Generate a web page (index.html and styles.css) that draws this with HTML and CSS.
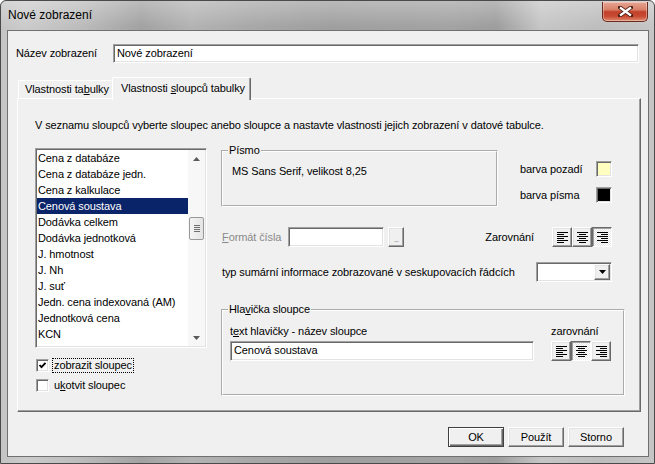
FILE: index.html
```html
<!DOCTYPE html>
<html lang="cs">
<head>
<meta charset="utf-8">
<title>Nové zobrazení</title>
<link rel="stylesheet" href="styles.css">
</head>
<body>
<div class="window">
  <div class="titlebar">
    <span class="title">Nové zobrazení</span>
    <div class="close-btn">
      <svg width="15" height="11" viewBox="0 0 15 11"><path d="M2 1.5 L13 9.5 M13 1.5 L2 9.5" stroke="#4a1a10" stroke-width="4" stroke-linecap="square"/><path d="M2 1.5 L13 9.5 M13 1.5 L2 9.5" stroke="#fff" stroke-width="2.2"/></svg>
    </div>
  </div>
  <div class="client">
    <div class="name-row">
      <span class="name-label">Název zobrazení</span>
      <div class="field name-field">Nové zobrazení</div>
    </div>
    <div class="tabs">
      <div class="tab tab-1">Vlastnosti ta<u>b</u>ulky</div>
      <div class="tab tab-active">Vlastnosti <u>s</u>loupců tabulky</div>
    </div>
    <div class="panel">
      <p class="desc">V seznamu sloupců vyberte sloupec anebo sloupce a nastavte vlastnosti jejich zobrazení v datové tabulce.</p>
      <div class="cols">
        <div class="col-left">
          <div class="listbox">
            <ul class="items">
              <li>Cena z databáze</li>
              <li>Cena z databáze jedn.</li>
              <li>Cena z kalkulace</li>
              <li class="sel">Cenová soustava</li>
              <li>Dodávka celkem</li>
              <li>Dodávka jednotková</li>
              <li>J. hmotnost</li>
              <li>J. Nh</li>
              <li>J. suť</li>
              <li>Jedn. cena indexovaná (AM)</li>
              <li>Jednotková cena</li>
              <li>KCN</li>
              <li>Kód položky</li>
            </ul>
            <div class="vscroll">
              <div class="sb-arrow"><svg width="7" height="4" viewBox="0 0 7 4"><path d="M3.5 0 L7 4 L0 4 Z" fill="#5a5a5a"/></svg></div>
              <div class="sb-track">
                <div class="sb-thumb"><svg width="6" height="7" viewBox="0 0 6 7"><path d="M0 .5h6M0 2.5h6M0 4.5h6M0 6.5h6" stroke="#6f6f6f"/></svg></div>
              </div>
              <div class="sb-arrow"><svg width="7" height="4" viewBox="0 0 7 4"><path d="M0 0 L7 0 L3.5 4 Z" fill="#5a5a5a"/></svg></div>
            </div>
          </div>
          <div class="check check-1">
            <span class="box"><svg width="9" height="9" viewBox="0 0 9 9"><path d="M1.5 4 L3.5 6.2 L7.5 1.8" stroke="#000" stroke-width="1.8" fill="none"/></svg></span>
            <span class="check-text focus">zobrazit sloupec</span>
          </div>
          <div class="check check-2">
            <span class="box"></span>
            <span class="check-text">u<u>k</u>otvit sloupec</span>
          </div>
        </div>
        <div class="col-right">
          <div class="row-font">
            <fieldset class="group group-font">
              <legend>Písmo</legend>
              <div class="font-name">MS Sans Serif, velikost 8,25</div>
            </fieldset>
            <div class="colors">
              <span>barva pozadí</span><span class="swatch swatch-bg"></span>
              <span>barva písma</span><span class="swatch swatch-fg"></span>
            </div>
          </div>
          <div class="row-format">
            <span class="format-label"><u>F</u>ormát čísla</span>
            <div class="field format-field"></div>
            <div class="raised dots-btn">...</div>
            <span class="align-label">Zarovnání</span>
            <div class="align-group">
              <div class="raised abtn"><svg width="11" height="11" viewBox="0 0 11 11"><path d="M0 .5h11M0 2.5h7M0 4.5h11M0 6.5h7M0 8.5h11M0 10.5h7" stroke="#000"/></svg></div>
              <div class="raised abtn"><svg width="11" height="11" viewBox="0 0 11 11"><path d="M0 .5h11M2 2.5h7M0 4.5h11M2 6.5h7M0 8.5h11M2 10.5h7" stroke="#000"/></svg></div>
              <div class="sunken-btn abtn"><svg width="11" height="11" viewBox="0 0 11 11"><path d="M0 .5h11M4 2.5h7M0 4.5h11M4 6.5h7M0 8.5h11M4 10.5h7" stroke="#000"/></svg></div>
            </div>
          </div>
          <div class="row-summary">
            <span class="summary-label">typ sumární informace zobrazované v seskupovacích řádcích</span>
            <div class="field combo">
              <span class="raised combo-btn"><svg width="7" height="4" viewBox="0 0 7 4"><path d="M0 0 L7 0 L3.5 4 Z" fill="#000"/></svg></span>
            </div>
          </div>
          <fieldset class="group group-header">
            <legend>Hla<u>v</u>ička sloupce</legend>
            <div class="header-row">
              <div class="header-text">
                <div class="lbl">t<u>e</u>xt hlavičky - název sloupce</div>
                <div class="field header-field">Cenová soustava</div>
              </div>
              <div class="header-align">
                <div class="lbl">zarovnání</div>
                <div class="align-group align-group-2">
                  <div class="raised abtn"><svg width="11" height="11" viewBox="0 0 11 11"><path d="M0 .5h11M0 2.5h7M0 4.5h11M0 6.5h7M0 8.5h11M0 10.5h7" stroke="#000"/></svg></div>
                  <div class="sunken-btn abtn"><svg width="11" height="11" viewBox="0 0 11 11"><path d="M0 .5h11M2 2.5h7M0 4.5h11M2 6.5h7M0 8.5h11M2 10.5h7" stroke="#000"/></svg></div>
                  <div class="raised abtn"><svg width="11" height="11" viewBox="0 0 11 11"><path d="M0 .5h11M4 2.5h7M0 4.5h11M4 6.5h7M0 8.5h11M4 10.5h7" stroke="#000"/></svg></div>
                </div>
              </div>
            </div>
          </fieldset>
        </div>
      </div>
    </div>
    <div class="buttons">
      <div class="btn btn-default">OK</div>
      <div class="btn">Použít</div>
      <div class="btn">Storno</div>
    </div>
  </div>
</div>
</body>
</html>
```

FILE: styles.css
```css
* { box-sizing: border-box; }
html, body { margin: 0; padding: 0; }
body {
  width: 655px;
  height: 464px;
  overflow: hidden;
  background: #fff;
  font: 11px/13px "Liberation Sans", Arial, sans-serif;
  letter-spacing: -0.1px;
  color: #000;
}
u { text-decoration: underline; text-underline-offset: 1px; }

.window {
  width: 655px;
  height: 464px;
  display: flex;
  flex-direction: column;
  border: 1px solid #4a4a4a;
  border-radius: 6px 6px 0 0;
  padding: 0 5px 6px 6px;
  background:
    linear-gradient(180deg, rgba(255,255,255,.28) 0, rgba(255,255,255,0) 26px),
    linear-gradient(90deg, #c4c4c4 0, #cbcbcb 25px, #bcbcbc 80px, #a2a2a2 140px, #b3b3b3 190px, #a8a8a8 250px, #9f9f9f 330px, #a3a3a3 450px, #9d9d9d 495px, #c6c6c6 540px, #bdbdbd 600px, #c6c6c6 655px);
}

.titlebar {
  height: 29px;
  flex: 0 0 29px;
  display: flex;
  align-items: flex-start;
}
.title {
  margin: 7px 0 0 1px;
  font: 12px/15px "Liberation Sans", Arial, sans-serif;
  letter-spacing: 0;
  color: #000;
}
.close-btn {
  margin: 1px 1px 0 auto;
  width: 46px;
  height: 20px;
  border: 1px solid #6b2a1e;
  border-top: none;
  border-radius: 0 0 5px 5px;
  background: linear-gradient(180deg, #e6a595 0, #d98169 40%, #c2402a 52%, #c84a33 75%, #de8a6c 100%);
  box-shadow: inset 0 0 0 1px rgba(255,255,255,.35);
  display: flex;
  align-items: center;
  justify-content: center;
}

.client {
  flex: 1;
  display: flex;
  flex-direction: column;
  border: 1px solid #707070;
  background: #f0f0f0;
}

/* sunken field */
.field {
  background: #fff;
  border: 1px solid;
  border-color: #a0a0a0 #fff #fff #a0a0a0;
  box-shadow: inset 1px 1px 0 #696969, inset -1px -1px 0 #e3e3e3;
  padding: 0 3px;
  line-height: 17px;
  white-space: nowrap;
}
.raised {
  background: #f0f0f0;
  border: 1px solid;
  border-color: #fff #696969 #696969 #fff;
  box-shadow: inset -1px -1px 0 #a0a0a0, inset 1px 1px 0 #e3e3e3;
}
.sunken-btn {
  border: 1px solid;
  border-color: #696969 #fff #fff #696969;
  box-shadow: inset 1px 1px 0 #a0a0a0;
  background: repeating-conic-gradient(#fff 0 25%, #e6e6e6 0 50%) 0 0 / 2px 2px;
}

.name-row {
  display: flex;
  align-items: center;
  padding: 13px 0 0 8px;
}
.name-label { width: 97px; flex: 0 0 97px; }
.name-field { width: 526px; height: 19px; }

.tabs {
  display: flex;
  align-items: flex-end;
  height: 21px;
  margin: 14px 0 0 10px;
}
.tab {
  border: 1px solid transparent;
  border-bottom: none;
  border-top-color: #fff;
  border-left-color: #fff;
  border-radius: 2px 2px 0 0;
  white-space: nowrap;
}
.tab-1 {
  width: 94px;
  height: 18px;
  padding: 2px 0 0 6px;
}
.tab-active {
  position: relative;
  z-index: 1;
  width: 139px;
  height: 23px;
  margin-bottom: -2px;
  padding: 4px 0 0 8px;
  background: #f0f0f0;
  border-right-color: #696969;
  box-shadow: inset -1px 0 0 #a0a0a0;
}

.panel {
  margin-left: 9px;
  width: 624px;
  height: 314px;
  border: 1px solid;
  border-color: #fff #696969 #696969 #fff;
  box-shadow: inset -1px -1px 0 #a0a0a0;
}
.desc {
  margin: 20px 0 0 17px;
  white-space: nowrap;
}
.cols {
  display: flex;
  margin-top: 12px;
  padding-left: 17px;
}
.col-left {
  width: 172px;
  flex: 0 0 172px;
  padding-top: 4px;
}
.col-right {
  width: 404px;
  margin-left: 14px;
}

.listbox {
  width: 172px;
  height: 200px;
  display: flex;
  background: #fff;
  border: 1px solid;
  border-color: #a0a0a0 #fff #fff #a0a0a0;
  box-shadow: inset 1px 1px 0 #696969, inset -1px -1px 0 #e3e3e3;
  padding: 1px;
  overflow: hidden;
}
.items {
  flex: 1;
  list-style: none;
  margin: 0;
  padding: 0;
  overflow: hidden;
}
.items li {
  height: 16px;
  line-height: 16px;
  padding-left: 1px;
  white-space: nowrap;
}
.items li.sel { background: #0a246a; color: #fff; }

.vscroll {
  width: 17px;
  flex: 0 0 17px;
  display: flex;
  flex-direction: column;
  background: #f7f7f7;
}
.sb-arrow {
  height: 17px;
  flex: 0 0 17px;
  display: flex;
  align-items: center;
  justify-content: center;
}
.sb-track { flex: 1; }
.sb-thumb {
  margin: 50px 1px 0 1px;
  height: 23px;
  border: 1px solid #999;
  border-radius: 2px;
  background: linear-gradient(90deg, #f4f4f4, #e4e4e4);
  display: flex;
  align-items: center;
  justify-content: center;
}

.check {
  display: flex;
  align-items: center;
  height: 15px;
}
.check-1 { margin-top: 10px; }
.check-2 { margin-top: 5px; }
.box {
  width: 13px;
  height: 13px;
  margin-left: 1px;
  background: #fff;
  border: 1px solid;
  border-color: #a0a0a0 #fff #fff #a0a0a0;
  box-shadow: inset 1px 1px 0 #696969, inset -1px -1px 0 #e3e3e3;
  display: flex;
  align-items: center;
  justify-content: center;
}
.check-text {
  margin-left: 3px;
  padding: 0 1px;
  border: 1px solid transparent;
  line-height: 13px;
  white-space: nowrap;
}
.check-text.focus { border: 1px dotted #000; }

.group {
  margin: 0;
  padding: 0;
  min-width: 0;
  border: 2px groove #fff;
}
.group legend {
  margin-left: 5px;
  padding: 0 1px;
  line-height: 13px;
}
.row-font {
  display: flex;
  align-items: flex-start;
}
.group-font {
  width: 277px;
  height: 63px;
  flex: 0 0 277px;
}
.font-name { margin: 8px 0 0 9px; white-space: nowrap; }
.colors {
  display: grid;
  grid-template-columns: 76px 16px;
  row-gap: 10px;
  align-items: center;
  margin: 17px 0 0 22px;
  white-space: nowrap;
}
.swatch {
  width: 16px;
  height: 16px;
  border: 1px solid;
  border-color: #a0a0a0 #fff #fff #a0a0a0;
  box-shadow: inset 1px 1px 0 #696969, inset -1px -1px 0 #e3e3e3;
}
.swatch-bg { background: #ffffc0; }
.swatch-fg { background: #000; }

.row-format {
  display: flex;
  align-items: center;
  height: 20px;
  margin-top: 20px;
}
.format-label {
  width: 67px;
  flex: 0 0 67px;
  padding-left: 1px;
  color: #8a8a8a;
  white-space: nowrap;
}
.format-field { width: 96px; height: 20px; }
.dots-btn {
  width: 16px;
  height: 20px;
  margin-left: 4px;
  color: #9a9a9a;
  font-size: 9px;
  line-height: 22px;
  text-align: center;
  letter-spacing: -1px;
}
.align-label { margin-left: auto; }
.align-group {
  display: flex;
  margin: 0 13px 0 18px;
}
.abtn {
  width: 20px;
  height: 20px;
  display: flex;
  align-items: center;
  justify-content: center;
}
.abtn svg { display: block; }

.row-summary {
  display: flex;
  align-items: center;
  height: 20px;
  margin-top: 15px;
}
.summary-label { padding-left: 1px; white-space: nowrap; }
.combo {
  width: 76px;
  height: 20px;
  margin: 0 13px 0 auto;
  padding: 1px;
  display: flex;
  justify-content: flex-end;
  align-items: center;
}
.combo-btn {
  width: 16px;
  height: 16px;
  display: flex;
  align-items: center;
  justify-content: center;
}

.group-header {
  width: 404px;
  height: 93px;
  margin-top: 21px;
}
.header-row {
  display: flex;
  padding: 9px 12px 0 7px;
}
.header-text { width: 304px; }
.lbl { line-height: 13px; white-space: nowrap; }
.header-field { margin-top: 3px; height: 20px; }
.header-align { margin-left: auto; }
.align-group-2 { margin: 3px 0 0 0; }

.buttons {
  display: flex;
  justify-content: flex-end;
  gap: 4px;
  margin-top: 15px;
  padding-right: 24px;
}
.btn {
  width: 56px;
  height: 20px;
  line-height: 18px;
  text-align: center;
  background: #f0f0f0;
  border: 1px solid;
  border-color: #fff #696969 #696969 #fff;
  box-shadow: inset -1px -1px 0 #a0a0a0, inset 1px 1px 0 #e3e3e3;
}
.btn-default {
  border-color: #404040;
  box-shadow: inset 1px 1px 0 #fff, inset -1px -1px 0 #696969, inset -2px -2px 0 #a0a0a0;
}
```
